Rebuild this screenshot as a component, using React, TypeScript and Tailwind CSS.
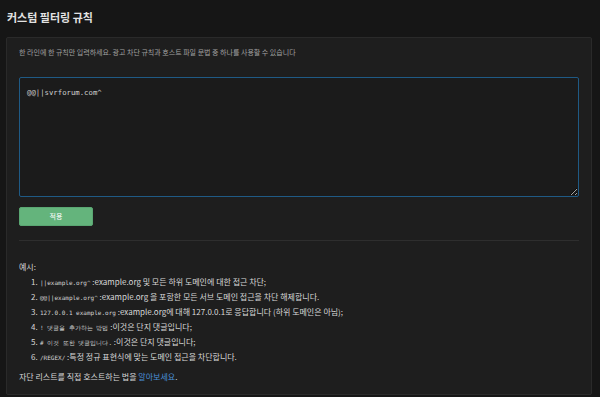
import { useState } from 'react'

const kr = { fontFamily: '"Noto Sans CJK KR", "Noto Sans", sans-serif' }
const mono = { fontFamily: '"DejaVu Sans Mono", "Liberation Mono", monospace' }

function Code({ children }: { children: string }) {
  return (
    <code className="text-[6px] text-[#d4d4d4]" style={mono}>
      {children}
    </code>
  )
}

const examples = [
  { code: '||example.org^', text: ' :example.org 및 모든 하위 도메인에 대한 접근 차단;' },
  { code: '@@||example.org^', text: ' :example.org 을 포함한 모든 서브 도메인 접근을 차단 해제합니다.' },
  { code: '127.0.0.1 example.org', text: ' :example.org에 대해 127.0.0.1로 응답합니다 (하위 도메인은 아님);' },
  { code: '! 댓글을 추가하는 방법', text: ' :이것은 단지 댓글입니다;' },
  { code: '# 이것 또한 댓글입니다.', text: ' :이것은 단지 댓글입니다;' },
  { code: '/REGEX/', text: ' :특정 정규 표현식에 맞는 도메인 접근을 차단합니다.' },
]

export default function App() {
  const [rules, setRules] = useState('@@||svrforum.com^')

  return (
    <div className="w-[600px] h-[397px] bg-[#161616] overflow-hidden" style={kr}>
      <h1 className="px-[7px] pt-[8px] h-[37px] text-[11px] font-semibold text-[#e2e2e2] leading-[18px]">
        커스텀 필터링 규칙
      </h1>

      <div className="ml-[6px] w-[586px] h-[358px] bg-[#1e1e1e] border border-[#2a2a2a] rounded-[2px] px-[12px]">
        <p className="mt-[9px] text-[7px] leading-[10px] text-[#a0a0a0]">
          한 라인에 한 규칙만 입력하세요. 광고 차단 규칙과 호스트 파일 문법 중 하나를 사용할 수 있습니다
        </p>

        <textarea
          value={rules}
          onChange={(e) => setRules(e.target.value)}
          spellCheck={false}
          className="mt-[20px] block w-[560px] h-[120px] bg-[#1b1b1b] border border-[#1f5a85] rounded-[2px] px-[7px] py-[10px] text-[7.3px] leading-[10px] text-[#d0d0d0] outline-none resize-y"
          style={mono}
        />

        <button className="mt-[10px] w-[74px] h-[19px] rounded-[2px] bg-[#64b47c] text-white text-[7px] border border-[#5aa672]">
          적용
        </button>

        <div className="mt-[14px] w-[560px] h-px bg-[#2e2e2e]" />

        <div className="mt-[18px] text-[8px] leading-[15px] text-[#d8d8d8]">
          <div>예시:</div>
          <ol className="pl-[12px]">
            {examples.map((ex, i) => (
              <li key={i} className="h-[15px] whitespace-pre">
                <span className="inline-block w-[9px]">{i + 1}.</span>
                <Code>{ex.code}</Code>
                <span>{ex.text}</span>
              </li>
            ))}
          </ol>
          <p className="mt-[5px]">
            자단 리스트를 직접 호스트하는 법을 <a className="text-[#4a90d9]">알아보세요</a>.
          </p>
        </div>
      </div>
    </div>
  )
}
